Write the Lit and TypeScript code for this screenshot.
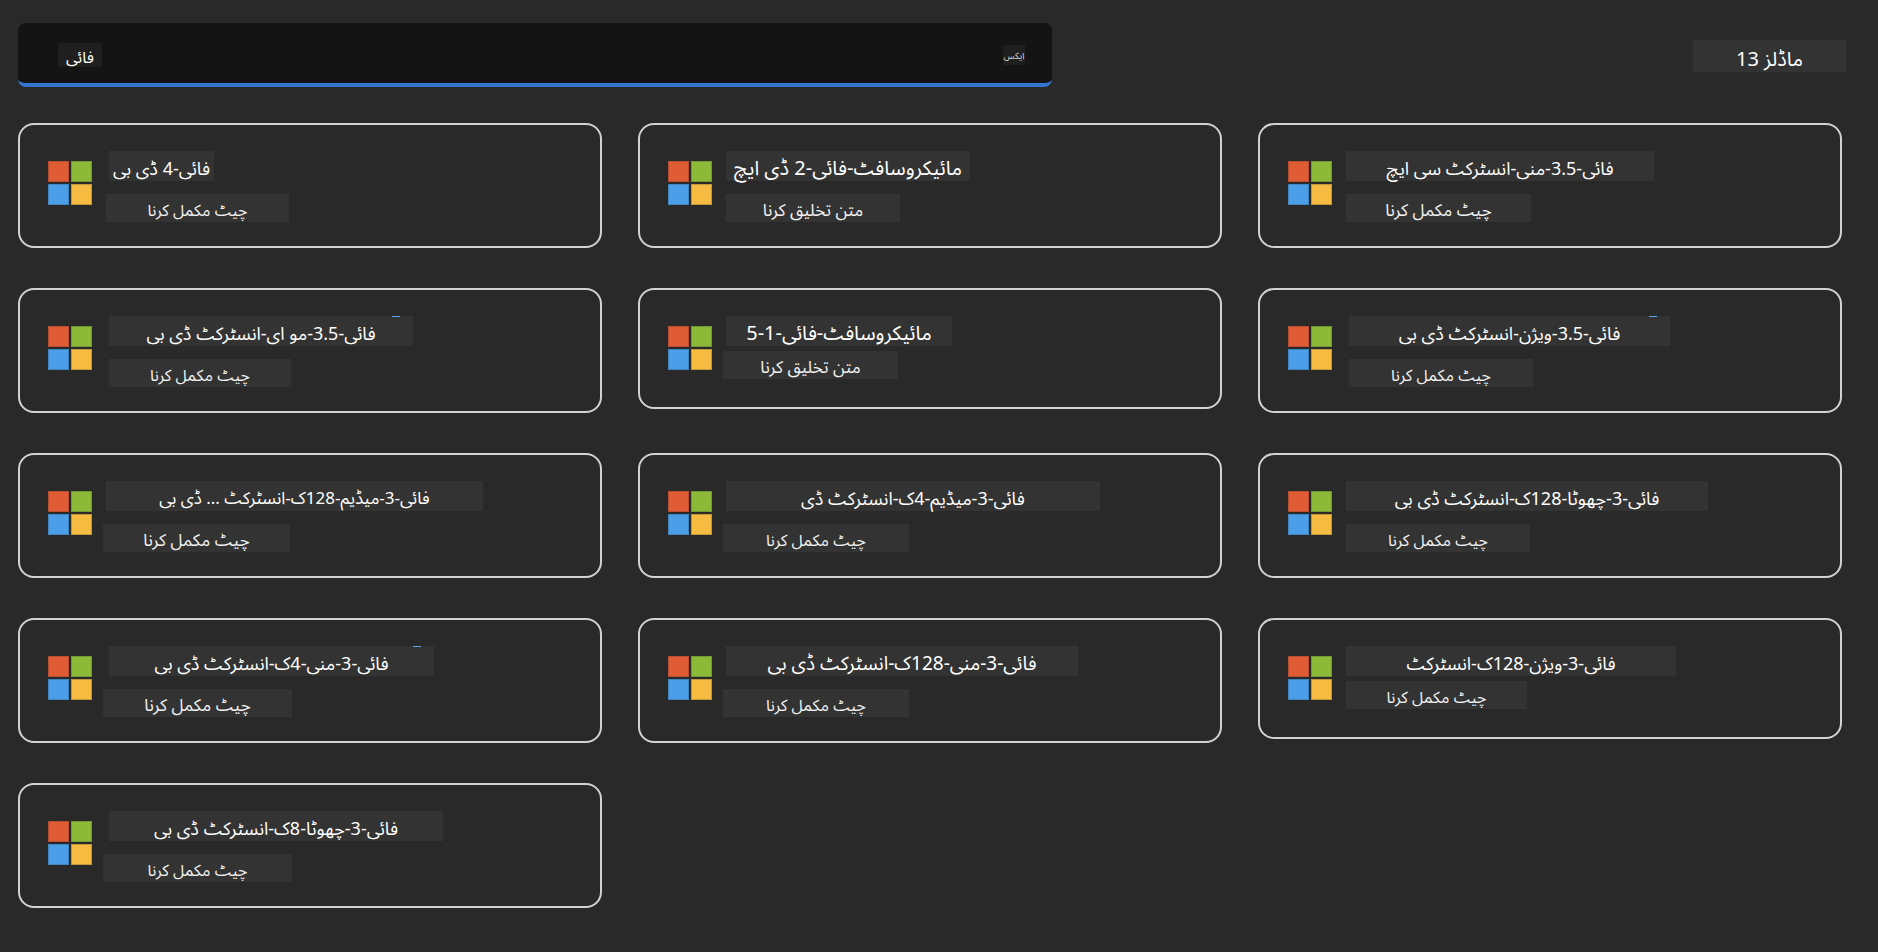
import { LitElement, html, css } from "lit";
import { customElement, property } from "lit/decorators.js";
import { classMap } from "lit/directives/class-map.js";
import { styleMap } from "lit/directives/style-map.js";

type Inset = "near" | "mid" | "far";
type Size = "small" | "regular" | "large" | "huge";

interface Line {
  text: string;
  width: number;
  inset: Inset;
  size: Size;
  marked?: boolean;
}

interface Model {
  title: Line;
  task: Line;
  compact?: boolean;
}

const CHAT = "چیٹ مکمل کرنا";
const TEXT_GEN = "متن تخلیق کرنا";

const line = (text: string, width: number, inset: Inset = "mid", size: Size = "regular", marked = false): Line => ({
  text,
  width,
  inset,
  size,
  marked,
});

const MODELS: Model[] = [
  { title: line("فائی-4 ڈی بی", 105, "far"), task: line(CHAT, 183) },
  { title: line("مائیکروسافٹ-فائی-2 ڈی ایچ", 244, "mid", "huge"), task: line(TEXT_GEN, 174, "mid", "large") },
  { title: line("فائی-3.5-منی-انسٹرکٹ سی ایچ", 308), task: line(CHAT, 185, "mid", "large") },
  { title: line("فائی-3.5-مو ای-انسٹرکٹ ڈی بی", 304, "far", "regular", true), task: line(CHAT, 182, "far") },
  {
    title: line("مائیکروسافٹ-فائی-1-5", 226, "mid", "huge"),
    task: line(TEXT_GEN, 175, "near", "large"),
    compact: true,
  },
  { title: line("فائی-3.5-ویژن-انسٹرکٹ ڈی بی", 321, "far", "regular", true), task: line(CHAT, 184, "far") },
  { title: line("فائی-3-میڈیم-128ک-انسٹرکٹ ... ڈی بی", 377, "mid", "small"), task: line(CHAT, 187, "near", "large") },
  { title: line("فائی-3-میڈیم-4ک-انسٹرکٹ ڈی", 374), task: line(CHAT, 186, "near") },
  { title: line("فائی-3-چھوٹا-128ک-انسٹرکٹ ڈی بی", 362), task: line(CHAT, 184) },
  { title: line("فائی-3-منی-4ک-انسٹرکٹ ڈی بی", 325, "far", "regular", true), task: line(CHAT, 189, "near", "large") },
  { title: line("فائی-3-منی-128ک-انسٹرکٹ ڈی بی", 352, "mid", "large"), task: line(CHAT, 186, "near") },
  { title: line("فائی-3-ویژن-128ک-انسٹرکٹ", 330), task: line(CHAT, 181), compact: true },
  { title: line("فائی-3-چھوٹا-8ک-انسٹرکٹ ڈی بی", 334, "far"), task: line(CHAT, 189, "near") },
];

@customElement("model-card")
export class ModelCard extends LitElement {
  @property({ attribute: false }) model!: Model;

  static styles = css`
    :host {
      display: block;
    }
    .card {
      box-sizing: border-box;
      min-height: 121px;
      display: flex;
      align-items: flex-start;
      gap: 10px;
      padding: 26px 20px 24px 28px;
      border: 2px solid #d2d2d2;
      border-radius: 16px;
      overflow: hidden;
    }
    .logo {
      flex: none;
      display: block;
      width: 44px;
      height: 44px;
      margin-top: 10px;
    }
    .lines {
      min-width: 0;
      display: flex;
      flex-direction: column;
      align-items: flex-start;
      gap: 13px;
    }
    .compact .lines {
      gap: 5px;
    }
    .line {
      position: relative;
      box-sizing: border-box;
      max-width: 100%;
      margin: 0;
      background: #333333;
      color: #ffffff;
      text-align: center;
      white-space: nowrap;
      font-weight: 400;
    }
    .title {
      height: 30px;
      font-size: 18px;
      line-height: 34px;
    }
    .title.small {
      font-size: 17px;
    }
    .title.large {
      font-size: 19px;
    }
    .title.huge {
      font-size: 20px;
    }
    .task {
      height: 28px;
      font-size: 16px;
      line-height: 32px;
      color: #f2f2f2;
    }
    .task.large {
      font-size: 17px;
    }
    .near {
      margin-left: 1px;
    }
    .mid {
      margin-left: 4px;
    }
    .far {
      margin-left: 7px;
    }
    .marked::after {
      content: "";
      position: absolute;
      top: 0;
      right: 13px;
      width: 8px;
      height: 1px;
      background: #5aa5ea;
    }
  `;

  private line(l: Line, kind: "title" | "task") {
    const classes = classMap({
      line: true,
      [kind]: true,
      [l.inset]: true,
      [l.size]: true,
      marked: !!l.marked,
    });
    const width = styleMap({ width: `${l.width}px` });
    return kind === "title"
      ? html`<h2 class=${classes} style=${width} dir="rtl">${l.text}</h2>`
      : html`<p class=${classes} style=${width} dir="rtl">${l.text}</p>`;
  }

  render() {
    return html`
      <article class=${classMap({ card: true, compact: !!this.model.compact })}>
        <svg class="logo" viewBox="0 0 44 44" aria-hidden="true">
          <rect x=".5" y=".5" width="20" height="20" fill="#e05c34" stroke="#b94f30" />
          <rect x="23.5" y=".5" width="20" height="20" fill="#8cb938" stroke="#749934" />
          <rect x=".5" y="23.5" width="20" height="20" fill="#4a9fe8" stroke="#4184be" />
          <rect x="23.5" y="23.5" width="20" height="20" fill="#f6bc42" stroke="#c3983b" />
        </svg>
        <div class="lines">${this.line(this.model.title, "title")} ${this.line(this.model.task, "task")}</div>
      </article>
    `;
  }
}

@customElement("app-root")
export class AppRoot extends LitElement {
  static styles = css`
    :host {
      display: block;
      box-sizing: border-box;
      min-height: 100vh;
      padding: 23px 32px 36px 18px;
      background: #292929;
      color: #ffffff;
      font-family: "Noto Sans", "Noto Sans Arabic", "Open Sans", "DejaVu Sans", sans-serif;
    }
    .top {
      display: flex;
      align-items: center;
      justify-content: space-between;
      gap: 36px;
      margin-bottom: 36px;
    }
    .search {
      flex: 0 1 1034px;
      box-sizing: border-box;
      height: 64px;
      display: flex;
      align-items: center;
      justify-content: space-between;
      padding: 4px 27px 0 40px;
      background: #141414;
      border-bottom: 4px solid #3375cf;
      border-radius: 8px;
      overflow: hidden;
    }
    .query {
      box-sizing: border-box;
      width: 44px;
      height: 24px;
      padding: 6px 0 0;
      border: 0;
      outline: 0;
      background: #1f1f1f;
      color: #ffffff;
      font: inherit;
      font-size: 16px;
      line-height: 18px;
      text-align: center;
    }
    .clear {
      width: 22px;
      height: 20px;
      padding: 2px 0 0;
      border: 0;
      background: #1f1f1f;
      color: #d8d8d8;
      font: inherit;
      font-size: 9px;
      line-height: 18px;
      white-space: nowrap;
    }
    .count {
      box-sizing: border-box;
      width: 153px;
      height: 32px;
      margin: 2px 0 0;
      background: #333333;
      font-size: 20px;
      line-height: 38px;
      text-align: center;
    }
    .grid {
      display: grid;
      grid-template-columns: repeat(3, minmax(0, 1fr));
      align-items: start;
      gap: 40px 36px;
      padding-right: 4px;
    }
  `;

  render() {
    return html`
      <header class="top">
        <div class="search" role="search">
          <input class="query" type="text" dir="rtl" aria-label="فائی" .value=${"فائی"} />
          <button class="clear" type="button" dir="rtl">ایکس</button>
        </div>
        <p class="count" dir="rtl">ماڈلز 13</p>
      </header>
      <main class="grid">${MODELS.map((m) => html`<model-card .model=${m}></model-card>`)}</main>
    `;
  }
}
